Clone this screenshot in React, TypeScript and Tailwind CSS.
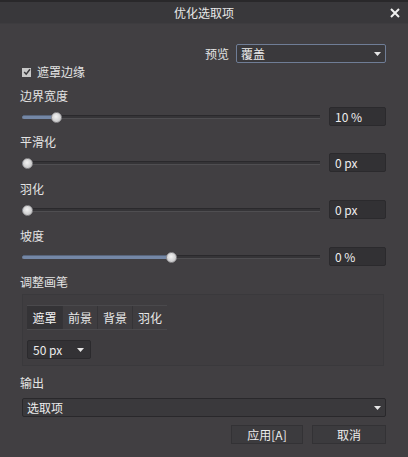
import React from "react";

const font = { fontFamily: '"Microsoft YaHei", "Noto Sans CJK SC", "Noto Sans", sans-serif' };

function Caret() {
  return (
    <svg width="7" height="4" viewBox="0 0 7 4" className="shrink-0">
      <path d="M0 0 L7 0 L3.5 4 Z" fill="#e6e6e6" />
    </svg>
  );
}

function Slider({ pos }: { pos: number }) {
  // pos: knob x offset from track start (px)
  return (
    <div className="relative h-[12px] flex-1 ml-[2px]">
      <div className="absolute left-0 right-0 top-[4px] h-[1px] bg-[#2a292c]" />
      <div className="absolute left-0 right-0 top-[5px] h-[2px] bg-[#353437]" />
      <div className="absolute left-0 right-0 top-[7px] h-[1px] bg-[#4f4e51]" />
      {pos > 2 && (
        <div
          className="absolute left-0 top-[4px] h-[4px] rounded-[2px] bg-[#7487a6] border-t border-[#58657c]"
          style={{ width: pos }}
        />
      )}
      <div
        className="absolute top-[1px] w-[11px] h-[11px] rounded-full bg-[radial-gradient(circle_at_45%_40%,#f2f2f2,#b9b9bb)] border border-[#8e8d90]"
        style={{ left: pos - 5 }}
      />
    </div>
  );
}

function SliderRow({ label, value, pos, mtLabel }: { label: string; value: string; pos: number; mtLabel: string }) {
  return (
    <>
      <div className={`${mtLabel} h-[14px] leading-[14px] text-[12px] text-[#e4e4e4]`}>{label}</div>
      <div className="mt-[4px] h-[19px] flex items-center">
        <Slider pos={pos} />
        <div className="ml-[9px] w-[57px] h-[19px] bg-[#323134] border border-[#2b2a2d] rounded-[2px] flex items-center pl-[5px] text-[12px] text-[#eeeeee]">
          {value}
        </div>
      </div>
    </>
  );
}

export default function App() {
  return (
    <div className="w-[408px] h-[457px] bg-[#413f42] flex flex-col overflow-hidden" style={font}>
      <div className="h-[24px] bg-[#39383b] border-t-2 border-[#29282a] border-b border-b-[#3d3c3f] relative flex items-center justify-center shrink-0">
        <span className="text-[12px] text-[#e8e8e8]">优化选取项</span>
        <svg className="absolute right-[8px] top-[6px]" width="10" height="10" viewBox="0 0 10 10">
          <path d="M1 1 L9 9 M9 1 L1 9" stroke="#f0f0f0" strokeWidth="2" />
        </svg>
      </div>
      <div className="flex flex-col pl-[20px] pr-[22px]">
        <div className="mt-[20px] h-[19px] flex items-center justify-end">
          <span className="text-[12px] text-[#e4e4e4] mr-[7px]">预览</span>
          <div className="w-[150px] h-[19px] border border-[#6f7d96] bg-[#3a393c] rounded-[2px] flex items-center justify-between pl-[4px] pr-[4px]">
            <span className="text-[12px] text-[#ececec]">覆盖</span>
            <Caret />
          </div>
        </div>
        <div className="mt-[2px] h-[14px] flex items-center ml-[2px]">
          <div className="w-[9px] h-[9px] bg-[#c8c8c8] flex items-center justify-center">
            <svg width="8" height="8" viewBox="0 0 8 8">
              <path d="M1.2 4 L3.2 6.2 L7 1.2" stroke="#3a393c" strokeWidth="1.5" fill="none" />
            </svg>
          </div>
          <span className="ml-[6px] text-[12px] text-[#e4e4e4]">遮罩边缘</span>
        </div>
        <SliderRow label="边界宽度" value="10 %" pos={34} mtLabel="mt-[10px]" />
        <SliderRow label="平滑化" value="0 px" pos={5} mtLabel="mt-[9px]" />
        <SliderRow label="羽化" value="0 px" pos={5} mtLabel="mt-[10px]" />
        <SliderRow label="坡度" value="0 %" pos={149} mtLabel="mt-[10px]" />
        <div className="mt-[9px] h-[14px] leading-[14px] text-[12px] text-[#e4e4e4]">调整画笔</div>
        <div className="mt-[5px] mx-[2px] h-[72px] border border-[#3a393c] bg-[#3f3d40] flex flex-col pl-[4px]">
          <div className="mt-[10px] flex h-[25px] w-[140px] border-t border-[#4a494c] border-b border-b-[#4a494c]">
            <div className="w-[35px] bg-[#343336] flex items-center justify-center text-[12px] text-[#f2f2f2]">遮罩</div>
            <div className="w-[35px] border-l border-[#353437] flex items-center justify-center text-[12px] text-[#e8e8e8]">前景</div>
            <div className="w-[35px] border-l border-[#353437] flex items-center justify-center text-[12px] text-[#e8e8e8]">背景</div>
            <div className="w-[35px] border-l border-[#353437] flex items-center justify-center text-[12px] text-[#e8e8e8]">羽化</div>
          </div>
          <div className="mt-[10px] w-[64px] h-[19px] bg-[#333235] border border-[#2b2a2d] rounded-[2px] flex items-center justify-between pl-[5px] pr-[6px]">
            <span className="text-[12px] text-[#ececec]">50 px</span>
            <Caret />
          </div>
        </div>
        <div className="mt-[10px] h-[14px] leading-[14px] text-[12px] text-[#e4e4e4]">输出</div>
        <div className="mt-[8px] ml-[2px] h-[19px] bg-[#3a393c] border border-[#29282b] rounded-[2px] flex items-center justify-between pl-[4px] pr-[4px]">
          <span className="text-[12px] text-[#ececec]">选取项</span>
          <Caret />
        </div>
        <div className="mt-[8px] flex justify-end gap-[9px]">
          <div className="w-[72px] h-[19px] bg-[#3c3b3e] border border-[#333235] flex items-center justify-center text-[12px] text-[#ececec]">应用[A]</div>
          <div className="w-[74px] h-[19px] bg-[#3c3b3e] border border-[#333235] flex items-center justify-center text-[12px] text-[#ececec]">取消</div>
        </div>
      </div>
    </div>
  );
}
